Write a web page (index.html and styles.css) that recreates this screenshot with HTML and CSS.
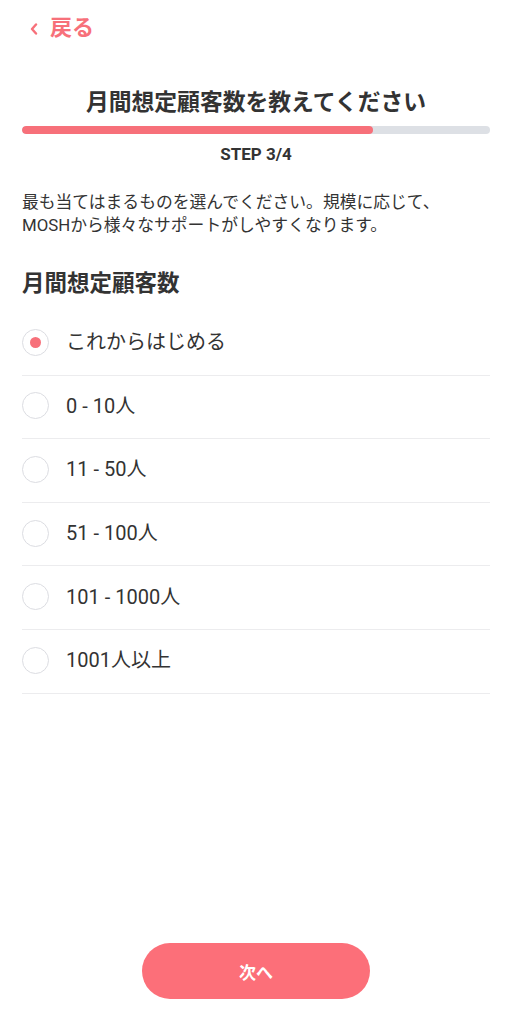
FILE: index.html
```html
<!DOCTYPE html>
<html lang="ja">
<head>
<meta charset="utf-8">
<link rel="stylesheet" href="styles.css">
</head>
<body>
<div class="page">
  <header class="topbar">
    <a class="back">
      <svg class="chev" width="10" height="12" viewBox="0 0 10 12"><path d="M7 1.5 L3 6 L7 10.5" fill="none" stroke="currentColor" stroke-width="2.4" stroke-linecap="round" stroke-linejoin="round"/></svg>
      <span>戻る</span>
    </a>
  </header>
  <main class="content">
    <h1 class="title">月間想定顧客数を教えてください</h1>
    <div class="progress"><div class="progress-fill" style="width:75%"></div></div>
    <div class="step">STEP 3/4</div>
    <p class="desc">最も当てはまるものを選んでください。規模に応じて、<br>MOSHから様々なサポートがしやすくなります。</p>
    <h2 class="section">月間想定顧客数</h2>
    <ul class="options">
      <li class="option"><span class="radio checked"></span><span class="label">これからはじめる</span></li>
      <li class="option"><span class="radio"></span><span class="label">0 - 10人</span></li>
      <li class="option"><span class="radio"></span><span class="label">11 - 50人</span></li>
      <li class="option"><span class="radio"></span><span class="label">51 - 100人</span></li>
      <li class="option"><span class="radio"></span><span class="label">101 - 1000人</span></li>
      <li class="option"><span class="radio"></span><span class="label">1001人以上</span></li>
    </ul>
  </main>
  <footer class="footer">
    <button class="next">次へ</button>
  </footer>
</div>
</body>
</html>
```
FILE: styles.css
```css
* { box-sizing: border-box; }
html, body { margin: 0; padding: 0; }
body {
  font-family: Roboto, "Noto Sans CJK JP", sans-serif;
  color: #333;
  background: #fff;
  width: 512px;
  height: 1024px;
  overflow: hidden;
}
.page {
  display: flex;
  flex-direction: column;
  height: 1024px;
}
.topbar {
  padding: 13px 22px 0 29px;
  height: 87px;
}
.back {
  display: inline-flex;
  align-items: center;
  gap: 11px;
  color: #f7707a;
  font-size: 22px;
  font-weight: 700;
  line-height: 30px;
}
.chev { display: block; margin-top: 1px; }
.content {
  padding: 0 22px;
  flex: 1;
}
.title {
  margin: 0;
  font-size: 22.8px;
  font-weight: 700;
  text-align: center;
  line-height: 32px;
  color: #333;
}
.progress {
  margin-top: 7px;
  height: 8px;
  background: #dde0e5;
  border-radius: 4px;
  overflow: hidden;
}
.progress-fill {
  height: 100%;
  background: #f7707a;
  border-radius: 4px;
}
.step {
  margin-top: 9px;
  text-align: center;
  font-size: 17px;
  font-weight: 700;
  line-height: 22px;
}
.desc {
  margin: 26px 0 0;
  font-size: 16.8px;
  line-height: 23px;
  color: #333;
}
.section {
  margin: 30px 0 0;
  font-size: 22.5px;
  font-weight: 700;
  line-height: 32px;
}
.options {
  list-style: none;
  margin: 13px 0 0;
  padding: 0;
}
.option {
  display: flex;
  align-items: center;
  gap: 17px;
  height: 63.6px;
  padding-bottom: 2px;
  border-bottom: 1.5px solid #ececee;
}
.radio {
  width: 27px;
  height: 27px;
  border-radius: 50%;
  border: 1.5px solid #dcdde2;
  display: flex;
  align-items: center;
  justify-content: center;
  flex-shrink: 0;
}
.radio.checked::after {
  content: "";
  width: 11px;
  height: 11px;
  border-radius: 50%;
  background: #f7707a;
}
.label {
  font-size: 20px;
  line-height: 26px;
  color: #333;
}
.footer {
  display: flex;
  justify-content: center;
  padding-bottom: 25px;
}
.next {
  width: 228px;
  height: 56px;
  border: none;
  border-radius: 28px;
  background: #fc6f79;
  color: #fff;
  font-family: Roboto, "Noto Sans CJK JP", sans-serif;
  font-size: 17px;
  font-weight: 700;
}
```
